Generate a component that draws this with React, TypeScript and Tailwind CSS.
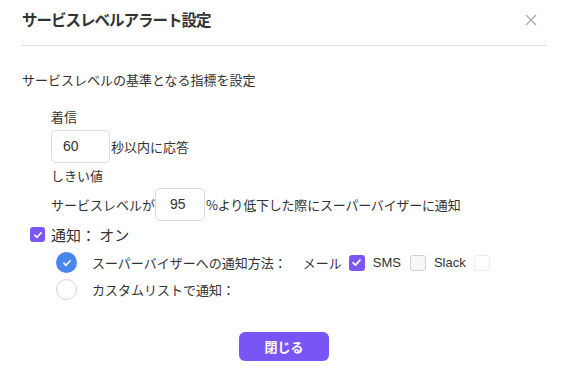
import React from "react";

const Check = ({ size = 10 }: { size?: number }) => (
  <svg width={size} height={size} viewBox="0 0 12 12" fill="none">
    <path d="M2.2 6.2 L4.9 8.8 L9.8 3.4" stroke="white" strokeWidth="1.9" strokeLinecap="round" strokeLinejoin="round" />
  </svg>
);

export default function App() {
  return (
    <div
      className="w-[568px] h-[386px] bg-white text-[#333] text-[13px] px-[22px]"
      style={{ fontFamily: '"Noto Sans CJK JP", "Noto Sans", sans-serif' }}
    >
      <div className="flex items-center justify-between h-[38px]">
        <div className="text-[15.5px] font-bold leading-[22px] tracking-[-1px] text-[#333]">サービスレベルアラート設定</div>
        <svg width="12" height="12" viewBox="0 0 12 12" className="mr-[9px] mt-[2px]">
          <path d="M1 1 L11 11 M11 1 L1 11" stroke="#a8a8a8" strokeWidth="1.2" />
        </svg>
      </div>
      <div className="h-px bg-[#dedede] mt-[7px]" />

      <div className="mt-[24px] leading-[20px]">サービスレベルの基準となる指標を設定</div>

      <div className="ml-[29px]">
        <div className="mt-[17px] leading-[20px]">着信</div>
        <div className="mt-[3px] flex items-center">
          <div className="w-[59px] h-[33px] border border-[#dcdcdc] rounded-[5px] flex items-center pl-[11px] text-[14px]" style={{ fontFamily: '"Liberation Sans", sans-serif' }}>60</div>
          <span className="ml-[1px] leading-[20px]">秒以内に応答</span>
        </div>
        <div className="mt-[3px] leading-[20px]">しきい値</div>
        <div className="mt-[2px] flex items-center">
          <span className="leading-[20px]">サービスレベルが</span>
          <div className="w-[50px] h-[33px] border border-[#dcdcdc] rounded-[5px] flex items-center pl-[14px] text-[14px]" style={{ fontFamily: '"Liberation Sans", sans-serif' }}>95</div>
          <span className="ml-[1px] leading-[20px] tracking-[-0.2px]">%より低下した際にスーパーバイザーに通知</span>
        </div>
      </div>

      <div className="mt-[6px] ml-[8px] flex items-center h-[15px]">
        <div className="w-[15px] h-[15px] rounded-[3px] bg-[#7b57f2] flex items-center justify-center">
          <Check size={10} />
        </div>
        <span className="ml-[6px] text-[15px] leading-[20px]">通知： オン</span>
      </div>

      <div className="mt-[10px] ml-[34px] flex items-center h-[21px]">
        <div className="w-[21px] h-[21px] rounded-full bg-[#4a86f0] flex items-center justify-center">
          <Check size={10} />
        </div>
        <span className="ml-[15px] leading-[20px]">スーパーバイザーへの通知方法：</span>
        <span className="ml-[16px] leading-[20px]">メール</span>
        <div className="ml-[7px] w-[16px] h-[16px] rounded-[3px] bg-[#7b57f2] flex items-center justify-center">
          <Check size={11} />
        </div>
        <span className="ml-[8px] leading-[20px]" style={{ fontFamily: '"Liberation Sans", sans-serif' }}>SMS</span>
        <div className="ml-[9px] w-[16px] h-[16px] rounded-[3px] border border-[#cfcfcf] bg-[#f7f7f7]" />
        <span className="ml-[8px] leading-[20px]" style={{ fontFamily: '"Liberation Sans", sans-serif' }}>Slack</span>
        <div className="ml-[8px] w-[16px] h-[16px] rounded-[3px] border border-[#ececec] bg-white" />
      </div>

      <div className="mt-[6px] ml-[34px] flex items-center h-[21px]">
        <div className="w-[21px] h-[21px] rounded-full border border-[#d4d4d4] bg-white" />
        <span className="ml-[15px] leading-[20px]">カスタムリストで通知：</span>
      </div>

      <div className="mt-[32px] flex justify-center">
        <button className="w-[90px] h-[29px] rounded-[6px] bg-[#7856f5] text-white text-[13px] font-bold">閉じる</button>
      </div>
    </div>
  );
}
